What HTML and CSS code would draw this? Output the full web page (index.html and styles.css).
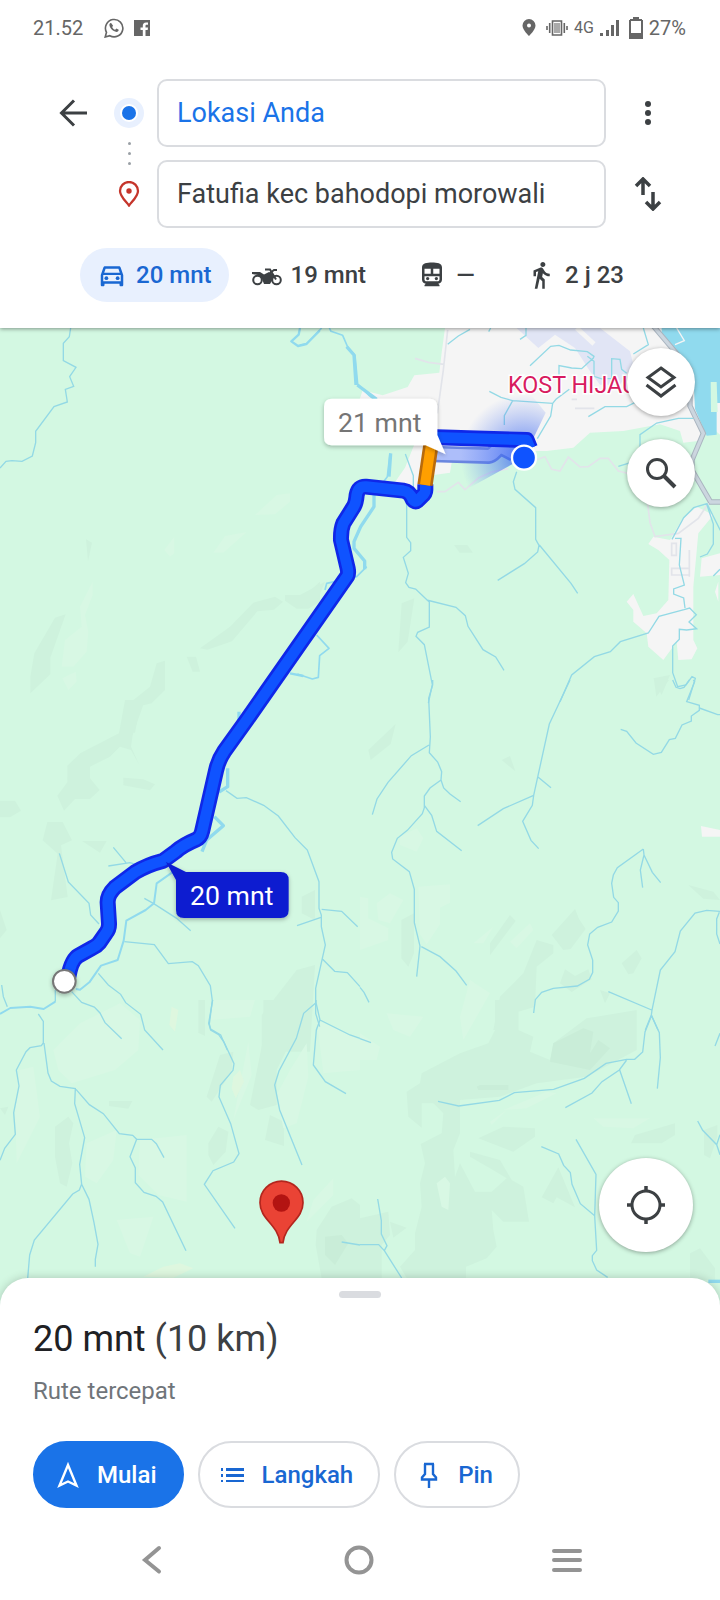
FILE: index.html
```
<!DOCTYPE html>
<html lang="id">
<head>
  <meta charset="UTF-8" />
  <meta name="viewport" content="width=device-width, initial-scale=1" />
  <title>Rute ke Fatufia</title>
  <link rel="stylesheet" href="styles.css">
</head>
<body>
  <header class="top">
    <div class="status-bar">
      <span class="clock">21.52</span>
      <svg class="status-icon" width="20" height="20" viewBox="0 0 20 20" aria-hidden="true">
        <path d="M1.2 19l1.3-4.7A8.7 8.7 0 1 1 5.800 17.700z" fill="none" stroke="#666" stroke-width="1.600"/>
        <path d="M7.300 5.200c-.5-.4-1.700.2-1.900 1.400-.3 2.800 3.600 7.200 7.100 7.300 1.300 0 2.300-.9 2.200-2.100l-2.300-1.200-1.200 1.200c-1.500-.5-2.500-1.600-3-2.900l.9-1.100z" fill="#666"/>
      </svg>
      <svg class="status-icon" width="16" height="16" viewBox="0 0 16 16" aria-hidden="true">
        <path d="M0 0h16v16h-4.500V10h2.200l.3-2.500h-2.500V6c0-.8.3-1.200 1.300-1.200H14V2.500h-2C9.800 2.500 8.800 3.800 8.800 5.700v1.800H6.500V10h2.300v6H0z" fill="#666"/>
      </svg>
      <span class="spacer"></span>
      <svg class="status-icon" width="14" height="17" viewBox="0 0 14 17" aria-hidden="true">
        <path d="M7 0a6.500 6.500 0 0 0-6.500 6.500C.5 11 7 17 7 17s6.500-6 6.500-10.500A6.500 6.500 0 0 0 7 0zm0 4.500a2 2 0 1 1 0 4 2 2 0 0 1 0-4z" fill="#666"/>
      </svg>
      <svg class="status-icon vibrate" width="22" height="16" viewBox="0 0 22 16" aria-hidden="true">
        <path d="M6.500 1h9v14h-9zM3.700 3v10M18.300 3v10M1 6v4M21 6v4" fill="none" stroke="#666" stroke-width="1.600"/>
        <path d="M8 3h6v10H8z" fill="#aaa"/>
      </svg>
      <span class="network">4G</span>
      <svg class="status-icon" width="19" height="18" viewBox="0 0 19 18" aria-hidden="true">
        <path d="M0 14h3v3H0zM6 11h3v6H6zM11 6h3v11h-3zM16 1h3v16h-3z" fill="#666"/>
      </svg>
      <svg class="status-icon battery" width="14" height="22" viewBox="0 0 14 22" aria-hidden="true">
        <path d="M4 0h6v2h3v1h1v19H0V3h1V2h3zM2 4v12h10V4z" fill="#666"/>
      </svg>
      <span>27%</span>
    </div>

    <form class="directions">
      <button type="button" class="icon-btn" aria-label="Kembali">
        <svg width="28" height="28" viewBox="0 0 28 28"><path d="M28 14H3M15 1.500L2.500 14 15 26.500" fill="none" stroke="#3c4043" stroke-width="3"/></svg>
      </button>
      <label class="marker" for="from" aria-label="Titik awal">
        <svg width="30" height="30" viewBox="0 0 30 30">
          <circle cx="15" cy="15" r="15" fill="#e8f0fe"/>
          <circle cx="15" cy="15" r="9" fill="#fff"/>
          <circle cx="15" cy="15" r="7" fill="#1a73e8"/>
        </svg>
      </label>
      <input id="from" class="from" type="text" value="Lokasi Anda">
      <button type="button" class="icon-btn" aria-label="Opsi lainnya">
        <svg width="28" height="28" viewBox="0 0 28 28" fill="#3c4043"><circle cx="14" cy="5" r="3"/><circle cx="14" cy="14" r="3"/><circle cx="14" cy="23" r="3"/></svg>
      </button>

      <span class="dots" aria-hidden="true"><i></i><i></i><i></i></span>

      <label class="marker to-marker" for="to" aria-label="Tujuan">
        <svg width="22" height="26" viewBox="0 0 22 26">
          <path d="M11 24.500C8 20.500 2 15.500 2 10a9 9 0 0 1 18 0c0 5.500-6 10.500-9 14.500z" fill="none" stroke="#c5352b" stroke-width="2.300"/>
          <circle cx="11" cy="10" r="2.700" fill="#c5352b"/>
        </svg>
      </label>
      <input id="to" class="to" type="text" value="Fatufia kec bahodopi morowali">
      <button type="button" class="icon-btn swap" aria-label="Tukar">
        <svg width="28" height="34" viewBox="0 0 28 34"><path d="M9 18V3M2 9l7-7 7 7M19 15v15M12 25l7 7 7-7" fill="none" stroke="#3c4043" stroke-width="3.500"/></svg>
      </button>
    </form>

    <nav class="modes" aria-label="Moda perjalanan">
      <button type="button" class="mode active" aria-pressed="true">
        <svg width="30" height="30" viewBox="0 0 24 24" fill="currentColor"><path d="M18.920 6.010C18.720 5.420 18.160 5 17.500 5h-11c-.66 0-1.210.42-1.420 1.010L3 12v8c0 .55.45 1 1 1h1c.55 0 1-.45 1-1v-1h12v1c0 .55.45 1 1 1h1c.55 0 1-.45 1-1v-8l-2.080-5.990zM6.850 7h10.290l1.080 3.110H5.770L6.850 7zM19 17H5v-5h14v5z"/><circle cx="7.500" cy="14.500" r="1.500"/><circle cx="16.500" cy="14.500" r="1.500"/></svg>
        20 mnt
      </button>
      <button type="button" class="mode">
        <svg width="30" height="30" viewBox="0 0 30 30" fill="#3c4043">
          <g fill="none" stroke="#3c4043" stroke-width="2"><circle cx="5.500" cy="20" r="4.300"/><circle cx="24.500" cy="20" r="4.300"/><path d="M13 9.500h5l6 10M18 13l4-3h3"/></g>
          <path d="M0 12h8l4 2.500 5-2.500 4 2 .5 4-3.500 6h-6l-2-5-4-4-6-1z"/>
        </svg>
        19 mnt
      </button>
      <button type="button" class="mode transit">
        <svg width="30" height="30" viewBox="0 0 24 24" fill="#3c4043"><path fill-rule="evenodd" d="M12 2C8 2 4 2.500 4 6v9.500C4 17.400 5.400 18.700 7 19l-1 1v1h12v-1l-1-1c1.600-.3 3-1.600 3-3.500V6c0-3.500-4-4-8-4zM6 7h5v4H6zm7 0h5v4h-5zm-7 6h12v2.500c0 .8-.7 1.500-1.500 1.500h-9c-.8 0-1.500-.7-1.500-1.500z"/><circle cx="8.500" cy="14.800" r="1.300"/><circle cx="15.500" cy="14.800" r="1.300"/></svg>
        —
      </button>
      <button type="button" class="mode">
        <svg width="30" height="30" viewBox="0 0 24 24" fill="#3c4043"><path d="M13.500 5.500c1.100 0 2-.9 2-2s-.9-2-2-2-2 .9-2 2 .9 2 2 2zM9.800 8.900L7 23h2.100l1.800-8 2.100 2v6h2v-7.500l-2.100-2 .6-3C14.800 12 16.800 13 19 13v-2c-1.900 0-3.500-1-4.300-2.400l-1-1.600c-.4-.6-1-1-1.700-1-.3 0-.5.1-.8.1L6 8.300V13h2V9.600l1.800-.7"/></svg>
        2 j 23
      </button>
    </nav>
  </header>

  <main class="map">
    <!-- map tiles, 3 units per pixel -->
    <svg class="canvas" viewBox="0 984 2160 2940" preserveAspectRatio="xMidYMin slice" role="img" aria-label="Peta rute">
      <defs>
        <radialGradient id="beam" gradientUnits="userSpaceOnUse" cx="672" cy="413" r="190">
          <stop offset="0" stop-color="#2b5cf0" stop-opacity=".8"/>
          <stop offset="1" stop-color="#5b7ff2" stop-opacity="0"/>
        </radialGradient>
        <filter id="soft" x="-20%" y="-20%" width="140%" height="160%">
          <feDropShadow dx="0" dy="5" stdDeviation="7" flood-opacity=".28"/>
        </filter>
      </defs>
      <rect y="984" width="2160" height="2940" fill="#d3f8e2"/>

      <!-- hills -->
      <g fill="#cef2dd">
        <path transform="translate(0 960)" d="M165 893l32-10-46 130v50l-60 57v-50l12-70zM258 658l18 10-12 56zM600 985l90-65 70-72 65-18 24 15-27 24-50 5-76 90-74 25zM855 825h60l45-40v60l-35 21h-35l-35-24zM560 1010h28l12 45h-22zM470 1030l25-8v88l-40 40-35 8-15 80h-32l17-90 60-48z"/>
        <path transform="translate(0 2100)" d="M375 0h60l-37 105-5 35 25 55-25-45-33-10-30 30-60 30v35l29 35-29 27h-45l-33 35-20-45 30-40v-50l40-38 115-59zM370 233l60 5 35 15-15 18-80-15zM0 302h45l18 30-33 20H0zM142 366h46l28 55-33 15 20 155-50 10 20-140-45-40zM246 423h74l-20 35zM0 630l20 60-20 25zM890 810l55-15-15 260H785V945zM905 590l40-20v90l-40-20z"/>
        <path transform="translate(900 960)" d="M462 675h40l17 23h-40zM0 825l75-40-20 50-55 30zM305 850l38-15-20 130-28 32zM1060 1075l50-10-25 60z"/>
        <path transform="translate(1080 2040)" d="M25 210l82-78-15 60-60 48zM425 240l25-12 16 46zM882 0h45l-38 50zM985 615l75 20 20 25-50-4zM124 720l38-20v120l-17 40-21-25zM575 765l70-78 12 30 20 30-45 60-22 3zM390 790l60-85 17 18-77 103zM785 850l45-40 15 25-25 45-15 3zM600 910l15-42 30 20 40-20 10 30-60 38zM720 930l30 10-15 30zM530 780l50 15v25l-50 40-5 120-50 15v55H400l20-100 70-70z"/>
        <path transform="translate(0 3000)" d="M790 0h145l-105 210v105l-55 15-25-15 40-200zM595 0h20v108l-20-10zM660 165l40-10-5 60-60 90-15-15zM327 303h70l-12 23-58-8zM165 380l40-30 15 20-13 60 10 60-17 70-20-10-15-80zM625 430l30-50 30 15-8 60-37 40-15-30zM810 345l42 20v73l-57-18zM950 690l45-70 60-25 25 20v220H965l-18-100zM0 325l25-5-10 25z"/>
        <path transform="translate(1080 3000)" d="M405 0L475 0 475 90 520 110 510 155 570 180 580 130 680 55 830 30 830 150 680 230 530 250 420 290 300 300 300 400 280 450 285 530 300 490 345 575 395 575 440 535 390 505 330 470 330 455 420 480 455 540 490 560 507 665 430 665 395 630 400 690 410 740 380 775 318 800 318 834 140 834 120 800 165 750 165 700 185 620 180 550 195 490 182 432 245 400 250 340 220 310 185 310 185 383 145 350 140 275 180 250 185 220 300 160 385 130 405 90z"/>
        <path transform="translate(1080 3000)" d="M355 415l75-35 95 5v25l-65 45zM545 592l50-90 50 120-55-30-10 18zM813 430l12-25 120-35v35l-40 25zM0 655l85-20 5 70-25 30v100H0zM90 665l50 18-40 30zM990 760l30-15 45 60v35H990zM1032 390l40-15v35l-22 65-18-10z"/>
      </g>
      <g fill="#c9edd8">
        <path transform="translate(1080 3000)" d="M580 130l90-45 30 10-10 65 25-40 35 25-60 65-120-25zM350 260l10-5h85v15h-90z"/>
        <path transform="translate(0 3000)" d="M975 710l50-5 20 25-40 65-30-30z"/>
      </g>
      <g fill="#d8f8e4">
        <path transform="translate(0 960)" d="M765 585l65-60 40-5v25l-45 38zM640 698l35-50 65-12-70 62zM493 690l30-40v50l-13 10zM240 860l38-75v40l-23 60 10 50-5 60-40 45h-35l10-80 50-40zM187 1075l40-20 3 30-25 25z"/>
        <path transform="translate(1080 2040)" d="M0 650l25 5v60l60 30v35L0 810zM175 620l95-7v55l-30 15v50l-40 60-20-30zM50 670l40-30 40 20-40 70-35-10zM340 790l60-50-30 50zM450 785l60-55 10 20-50 55zM330 900l60 40-80 140-10-70zM120 470l50-25 20 30-20 40-50-20z"/>
        <path transform="translate(0 3000)" d="M160 150l80-80 120-60 60 50-5 90-70 60-130 40-40-40zM640 0h125l-15 50-120 10zM870 210l50-80 5 100-35 140-40 15-20-100zM950 60l130 60v90l-110 10zM60 210l40-10 20 150-70 140-5-150zM260 430l90-40-10 90-50 70-35-20zM420 420l140-15v200l-85-20-60-60zM350 660l110-10-40 120-30-10zM700 360l45-235 10 100zM940 600l60-65v50l-80 80z"/>
        <path transform="translate(1080 3000)" d="M0 100l60 40-10 40H0zM80 40l110 10-40 60-50-20zM700 355h170l-50 30-90-5zM430 330l130-55 30 5-90 45zM390 365l50-35-45 45zM230 550l25-20 15 20-5 80-20-10z"/>
      </g>
      <g fill="#def7df">
        <path transform="translate(0 3000)" d="M515 20l20 10-10 65-17-20zM700 230l20-20 12 35-25 50-12-30zM430 830l60-30 50-10 40 15-60 28z"/>
      </g>

      <!-- town and coast -->
      <g transform="translate(900 960)">
        <path fill="#f5f5f5" d="M435 24h825v320l-60-54v72l-50 6-10-35-60-20-110 20-100 5-50 45-80 10-60 0-220 5-10 60-70 10-40 45H350l-80-5 45-65 60-150-125-15-72-37 10-30 60 15 75-25 20-35 75-8 7-60z"/>
        <path fill="#f5f5f5" d="M1145 600L1190 560 1240 585 1195 640 1180 800 1180 960 1192 985 1175 1018 1135 1020 1130 965 1090 1020 1045 980 1040 940 1000 905 1000 870 980 845 1000 822 1030 888 1070 880 1105 840 1108 720 1075 690 1045 672 1060 650 1110 660z"/>
        <path fill="#f5f5f5" d="M1205 715l55-15v65l-60 5zM1255 785v60l-10-30z"/>
        <path fill="#e1e5f5" d="M650 24l65 60 50-40 60 40 45 70 30 40h60l40-60-10-40-90-70z"/>
        <path fill="none" stroke="#f5f5f5" stroke-width="14" d="M830 24l52 48"/>
        <path fill="#90daee" d="M1085 24h175v225h-10v95l-30 3-35-80-5-100-55-75-40-40z"/>
        <path fill="none" stroke="#f5f5f5" stroke-width="4" d="M1130 24l23 38-28 12"/>
        <path fill="#d3f8e2" d="M1232 186h18l3 90h-20z"/>
        <path fill="none" stroke="#aab5c0" stroke-width="16" d="M1060 18l110 130 0 110 40 82-34 80 0 30 56 96h30"/>
        <path fill="none" stroke="#ccd6df" stroke-width="10" d="M1060 18l110 130 0 110 40 82-34 80 0 30 56 96h30"/>
        <g fill="none" stroke="#e2e4ea" stroke-width="5">
          <path d="M443 30l-13 120-18 130M345 115l40 12 47 6M410 515h25l40-28 20 22 40-35 40-18 50-10M680 430l55-20 20 38 25 5 25-42 35 30 25-1 35-25h25l30 38 60 15 25 60 10 80 15 42 70-10 60-45 30-45M815 238h16M825 265h58M1115 670v36h14v-36zM1115 745h53v20h-53zM1168 690v80"/>
        </g>
      </g>

      <!-- rivers -->
      <g class="stream">
        <path transform="translate(0 960)" d="M212 24l-4 26-18 20v52l38 20-19 28 12 29-25 9 6 38-40 14-55 74v34l-10 40-31 16-30-2-18 2-18 20"/>
        <path transform="translate(900 960)" d="M510 28l-35 20-32 25M566 35l6-11M660 58l18-12V24M690 137l62-58 25-3 35 14 50 5 20 14-2 5-35 32-30-2-38-7v30M862 109l20 15 0 45 30 10M980 160l-15-12-5-30-25-2v60l-30 0M568 214l35 18 35 10-25 45v28M638 242l120 8 10-12 40-30M758 250l-6 38-40 68M865 290l50-30h65l30-15M1030 24l15 50-45 28M1180 295h-45l-65 14-50 35v35l0 40-65 20M316 402l24 65 0 45-20 25v115l12 16v24l-22 20 15 48-8 28 10 14 20 5 35 34 6 5v75l-35 16-5 12 25 25 24 120-12 55M380 840l88 22 28 25 8 32 45 70 38 22 25 40M650 455l-10 30 5 23 62 55v95l10 18-4 20-40 35-80 50M718 675l95 115 20 30M780 1145l35-80 68-55 48-15 30-30 84-26 32-50 75-20 17-5 20 20-22 22 23 20-30 4-22-2v30l-20 20v80l15 42 25-5 18-25 10 5-20 65M1116 658l35-65 30-30 40-12 40 80M1220 552l20 60v60l-18 30-22 9M1125 655h18l-5 80 15 60-32 12v15l30 12 4 30M1240 768l20-20"/>
        <path transform="translate(0 2100)" d="M678 272l33 23 28-2 52 23 44 32 50 65 37 37 35 95v80l7 20v35l12 55-9 40-20 90v75l12 40M965 628l60 6 48 46M963 652l-72 25M968 778l36 36 38 4 38 42M325 498l65-10 40 12M340 442l38 46M178 460l27 86 62 64 5 35 25 27M433 595l27 15 70 45 42 37M373 725l90 9 42 57 72-6 18 12 36 60 6 45-9 70 4 15 30 18 20 45M295 820l30 35 37 28 15 25 45 35 12 47 55 60M215 875l30 32 38 14 17 18 15 29 50 48M5 855l5 35 12 30M166 870v35"/>
        <path transform="translate(1080 2040)" d="M218 0v15l-12 40 5 115-3 48 25 28 12 29-2 25 8 24 19 18 32 23M207 195l-53 32-70 80-33 50-14 47M243 300l-33 24-17 24v35l-6 18-45 50-30 24-17 42 3 20 50 38 15 53v100l17 70-10 92M193 376l22 30 15 48 75 58M184 800l56 30 48 43 32 43M630 0l-62 132-47 214-4 30-29 48 25 57 23 25M521 346l-91 40-77 51M533 290l40 33M938 0l10 22 12 4 12-4 16-22M1000 0l4 5-24 60 38 11v15l-24 17v15l-28 12-20 40-18 4-24 38-24 6-52-34-28-35-18-6M1018 84l55 20h10M850 507l-78 56-12 22-5 25 6 42 14 16v25l-20 33-42 16-24 20-6 33 15 45v38l-10 20-36 20-72 7-35 12-19 22-5 40M850 507l2 18-11 45 7 53M852 525l25 52 25 31M1080 694l-40-3-35 8-44 54-16 62-44 55-25 120-2 15-18 45M745 935l130 55M874 1005l20 45M1078 697l-8 20v45l10 30M0 922l12 15 15 30"/>
        <path transform="translate(0 3000)" d="M115 42l15 22v65l-6 8-34 6-12 12-29 55 8 48-16 80 5 65-32 42-14 36M132 129l12 90 10 24 26 16 46 7-2 45 30 102-15 80 6 60 22 45 15 70 12 65-8 45v22M245 552l-7 18-20 12-115 138-14 45-6 70M228 268l40 46 42 27 48 60 40 5 12 12h45l14 13 23 42M410 418l-20 52 16 34v44l26 29 36 12 20 17 70 146M638 0l-12 70 6 20 24 14 16 22 30 65-3 20-38 45-4 35 35 80 25 90-16 25-62 26-26 41 92 132M948 0v8l-37 32-22 75-52 98-13 42 15 75 67 165M948 8l12 52-11 30-9 105 36 50 62 36M960 60l90 45 30 10M1025 726l55 9"/>
        <path transform="translate(1080 3000)" d="M0 116l33 12M875 46l-20 50-7 60-24 22h-24l-62 12-65 45-92 33-118 10-45 23-122 17-62-14M800 180l-22 30-52 35-30 34-80 44M779 210l35 101M874 46l24 52 3 75-9 93M544 440l52 22 15 34 20 22 5 35 25 58 43 36M648 418l60 105-4 125 6 103-13 16v15l13 28 33 22M53 597l11 65v40l17 35-8 15-17-18H0M73 752l52 82M1013 363l15 28 42 43 10 30M1070 434l10-30M1080 100l-15 38"/>
      </g>
      <g fill="none" stroke="#90daee" stroke-width="10" stroke-linejoin="round">
        <path transform="translate(900 960)" stroke-width="5" d="M88 24l5 10 35 12 15 35 22 25 8 86 35 35 25 20M0 75l20-3 45-48M270 400l-8 70-30 40M50 945l37 40-28 22-4 65-18 5-45-15M200 740l-30 30-90 20-5 20"/>
        <path transform="translate(900 960)" d="M140 80l22 25 6 90M172 195l58 43M272 400l-5 70M222 520v40l-40 60-20 45 0 20 32 38v25"/>
        <path transform="translate(0 960)" d="M900 24l-4 20-22 20 20 14 25-6 40-40M870 1060l40 8M720 1190l-10 30" stroke-width="7"/>
        <path transform="translate(0 2100)" d="M717 35v30M683 205v55l-26 16M643 350l27 27-50 43-14 35" />
        <path transform="translate(0 2100)" stroke-width="6" d="M520 515l-50 35-8 60-25 20-58 32-8 60-18 58-50 17-35 50-28 22-12-2M166 905l-35 22-40-7-60 4-31 18"/>
        <path transform="translate(1080 3000)" d="M1045 844h35"/>
      </g>
      <path fill="#f5f5f5" d="M2103 2478l57 12v20h-54z"/>

      <!-- location beam and alternative route -->
      <g transform="translate(900 960)">
        <path fill="none" stroke="#6a86df" stroke-width="50" d="M400 402l165 5c20-2 20-24 42-24l35 18"/>
        <path fill="none" stroke="#adbefa" stroke-width="34" d="M400 402l165 5c20-2 20-24 42-24l35 18"/>
        <path fill="url(#beam)" d="M672 413l65-135-57-70-140 25-70 150 30 125z"/>
      </g>

      <!-- main route -->
      <g fill="none" stroke-linejoin="round">
        <path stroke="#0f27e8" stroke-width="48" d="M1310 1312l270 8 10 25M1276 1453V1470Q1276 1480 1266 1488L1252 1502Q1245 1508 1238 1498Q1230 1475 1210 1472L1098 1460Q1075 1458 1070 1485Q1068 1510 1060 1522L1030 1570Q1022 1590 1023 1620L1043 1705Q1046 1720 1042 1728L740 2160L672 2255Q655 2280 648 2312L606 2495Q602 2512 588 2519Q550 2535 528 2554L490 2582Q440 2595 405 2617L345 2662Q322 2685 323 2708L327 2770Q328 2787 318 2799L298 2828Q290 2838 275 2845L235 2867Q215 2878 205 2930"/>
        <path stroke="#0f53ff" stroke-width="32" d="M1310 1312l270 8 10 25M1276 1447V1470Q1276 1480 1266 1488L1252 1502Q1245 1508 1238 1498Q1230 1475 1210 1472L1098 1460Q1075 1458 1070 1485Q1068 1510 1060 1522L1030 1570Q1022 1590 1023 1620L1043 1705Q1046 1720 1042 1728L740 2160L672 2255Q655 2280 648 2312L606 2495Q602 2512 588 2519Q550 2535 528 2554L490 2582Q440 2595 405 2617L345 2662Q322 2685 323 2708L327 2770Q328 2787 318 2799L298 2828Q290 2838 275 2845L235 2867Q215 2878 205 2930"/>
        <path stroke="#b86a0c" stroke-width="46" d="M1295 1320l-20 135"/>
        <path stroke="#ff9f00" stroke-width="30" d="M1295 1320l-20 135"/>
      </g>

      <circle cx="1572" cy="1373" r="36" fill="#0f53ff" stroke="#fff" stroke-width="7"/>
      <circle cx="193" cy="2944" r="34" fill="#fff" stroke="#777" stroke-width="6" filter="url(#soft)"/>

      <!-- destination pin -->
      <path d="M840 3728c-6-55-60-70-60-120a64 64 0 0 1 129 0c0 50-54 65-60 120z" fill="#ea4335" stroke="#b3261e" stroke-width="5"/>
      <circle cx="844" cy="3609" r="26" fill="#b31412"/>

      <text class="place" x="1524" y="1180">KOST HIJAU</text>

      <g filter="url(#soft)">
        <path fill="#fff" d="M996 1196h292q24 0 24 24v85l25 58-60-27H996q-24 0-24-24v-92q0-24 24-24z"/>
      </g>
      <text class="eta" x="1014" y="1296">21 mnt</text>
      <g filter="url(#soft)">
        <path fill="#0b1cd0" d="M498 2586l60 30h284q24 0 24 24v90q0 24-24 24H552q-24 0-24-24v-90z"/>
      </g>
      <text class="eta chosen" x="570" y="2714">20 mnt</text>
    </svg>

    <div class="map-tools">
      <button type="button" class="fab" aria-label="Lapisan peta">
        <svg width="32" height="34" viewBox="0 0 32 34" fill="none" stroke="#3c4043" stroke-width="3"><path d="M16 3L29 12.500 16 22 3 12.500zM1.500 20L16 31l14.500-11"/></svg>
      </button>
      <button type="button" class="fab" aria-label="Telusuri">
        <svg width="32" height="32" viewBox="0 0 32 32" fill="none" stroke="#3c4043" stroke-width="3"><circle cx="12" cy="12" r="9.500"/><path d="M19 19l11 11" stroke-width="4"/></svg>
      </button>
    </div>
    <button type="button" class="fab locate" aria-label="Lokasi saya">
      <svg width="38" height="38" viewBox="0 0 38 38" fill="none" stroke="#3c4043" stroke-width="3"><circle cx="19" cy="19" r="14"/><path d="M19 0v6M19 32v6M0 19h6M32 19h6" stroke-width="3.500"/></svg>
    </button>
  </main>

  <section class="sheet">
    <div class="handle"></div>
    <h1>20 mnt <span>(10 km)</span></h1>
    <p>Rute tercepat</p>
    <div class="actions">
      <button type="button" class="primary">
        <svg width="28" height="28" viewBox="0 0 28 28" fill="none" stroke="currentColor" stroke-width="2.400"><path d="M14 4L5.500 24.500 14 20.500l8.500 4z"/></svg>
        Mulai
      </button>
      <button type="button">
        <svg width="28" height="28" viewBox="0 0 28 28" fill="currentColor"><path d="M2 7h2v3H2zM7 7h18v3H7zM2 13h2v3H2zM7 13h18v3H7zM2 19h2v2H2zM7 19h18v2H7z"/></svg>
        Langkah
      </button>
      <button type="button">
        <svg width="28" height="28" viewBox="0 0 28 28" fill="none" stroke="currentColor" stroke-width="2.400"><path d="M9 3h10M10 3v10l-3 3.500v2h14v-2L18 13V3M14 18v9"/></svg>
        Pin
      </button>
    </div>
    <nav class="system-nav" aria-label="Navigasi sistem">
      <button type="button" aria-label="Kembali"><svg width="30" height="30" viewBox="0 0 30 30"><path d="M22 3L8 15l14 11.500"/></svg></button>
      <button type="button" aria-label="Beranda"><svg width="30" height="30" viewBox="0 0 30 30"><circle cx="15" cy="15" r="12.500"/></svg></button>
      <button type="button" aria-label="Terbaru"><svg width="30" height="30" viewBox="0 0 30 30"><path d="M2 6h26M2 15h26M2 25h26"/></svg></button>
    </nav>
  </section>
</body>
</html>
```
FILE: styles.css
```
*, *::before, *::after {
  box-sizing: border-box;
}
body {
  margin: 0;
  min-height: 100vh;
  display: flex;
  flex-direction: column;
  font-family: Roboto, "Liberation Sans", Arial, sans-serif;
  background-color: #fff;
  color: #3c4043;
}
button {
  border: 0;
  padding: 0;
  background: none;
  font-family: inherit;
  cursor: pointer;
}
svg {
  display: block;
  flex: none;
}

/* Header */
.top {
  position: relative;
  z-index: 1;
  background-color: #fff;
  box-shadow: 0 1px 4px rgba(0, 0, 0, 0.4);
}
.status-bar {
  display: flex;
  align-items: center;
  height: 55px;
  padding: 0 34px 0 33px;
  font-size: 20px;
  color: #666;
}
.status-bar .clock {
  margin-right: 21px;
}
.status-bar .status-icon {
  margin-right: 10px;
}
.status-bar .vibrate,
.status-bar .battery,
.status-bar .network {
  margin-right: 6px;
}
.status-bar .network {
  font-size: 16px;
}
.spacer {
  flex: 1;
}

.directions {
  display: grid;
  grid-template-columns: 56px 56px 1fr 84px;
  grid-template-rows: 68px 13px 68px;
  align-items: center;
  justify-items: center;
  margin: 0;
  padding: 24px 30px 20px 45px;
}
.directions input {
  width: 100%;
  height: 68px;
  padding: 0 18px;
  border: 2px solid #dadce0;
  border-radius: 10px;
  background-color: #fff;
  font-family: inherit;
  font-size: 27px;
  color: #3c4043;
}
.directions input:focus {
  outline: none;
  border-color: #1a73e8;
}
.directions .from {
  color: #1a73e8;
}
.dots {
  grid-column: 2;
  display: flex;
  flex-direction: column;
  gap: 7px;
}
.dots i {
  width: 3px;
  height: 3px;
  border-radius: 50%;
  background-color: #9aa0a6;
}
.to-marker {
  grid-area: 3 / 2;
}
.to {
  grid-area: 3 / 3;
}
.swap {
  grid-area: 3 / 4;
}

.modes {
  display: flex;
  gap: 6px;
  padding: 0 80px 26px;
}
.mode {
  display: flex;
  align-items: center;
  justify-content: center;
  gap: 9px;
  height: 54px;
  padding: 0 17px;
  border-radius: 27px;
  font-size: 24px;
  font-weight: 500;
  color: #3c4043;
  white-space: nowrap;
}
.mode.transit {
  min-width: 114px;
}
.mode.active {
  background-color: #e8f0fe;
  color: #1967d2;
}

/* Map */
.map {
  position: relative;
  flex: 1;
  min-height: 480px;
  overflow: hidden;
  background-color: #d3f8e2;
}
.canvas {
  position: absolute;
  inset: 0;
  width: 100%;
  height: 100%;
}
.stream {
  fill: none;
  stroke: #93d9e5;
  stroke-width: 4;
}
.place {
  font-size: 70px;
  fill: #d81b60;
  stroke: #fff;
  stroke-width: 9;
  paint-order: stroke;
}
.eta {
  font-size: 80px;
  fill: #757575;
}
.eta.chosen {
  fill: #fff;
}
.map-tools {
  position: absolute;
  top: 20px;
  right: 25px;
  display: flex;
  flex-direction: column;
  gap: 23px;
}
.fab {
  display: flex;
  align-items: center;
  justify-content: center;
  width: 68px;
  height: 68px;
  border-radius: 50%;
  background-color: #fff;
  box-shadow: 0 1px 4px rgba(0, 0, 0, 0.35);
}
.locate {
  position: absolute;
  right: 27px;
  bottom: 56px;
  width: 94px;
  height: 94px;
}

/* Bottom sheet */
.sheet {
  position: relative;
  margin-top: -30px;
  padding: 13px 33px 0;
  border-radius: 28px 28px 0 0;
  background-color: #fff;
  box-shadow: 0 0 10px rgba(0, 0, 0, 0.2);
}
.handle {
  width: 42px;
  height: 7px;
  margin: 0 auto 19px;
  border-radius: 4px;
  background-color: #dadce0;
}
.sheet h1 {
  margin: 0 0 14px;
  font-size: 36px;
  line-height: 44px;
  font-weight: 400;
  color: #202124;
}
.sheet h1 span {
  color: #3c4043;
}
.sheet p {
  margin: 0 0 34px;
  font-size: 24px;
  line-height: 32px;
  color: #70757a;
}
.actions {
  display: flex;
  gap: 14px;
}
.actions button {
  display: flex;
  align-items: center;
  gap: 15px;
  height: 67px;
  padding: 0 25px 0 19px;
  border: 2px solid #dadce0;
  border-radius: 34px;
  font-size: 24px;
  font-weight: 500;
  color: #1967d2;
}
.actions .primary {
  border-color: #1a73e8;
  background-color: #1a73e8;
  color: #fff;
}
.system-nav {
  display: grid;
  grid-template-columns: repeat(3, 1fr);
  justify-items: center;
  align-items: center;
  height: 80px;
  margin-top: 12px;
  padding: 0 16px 0 15px;
}
.system-nav svg {
  fill: none;
  stroke: #949494;
  stroke-width: 4;
  stroke-linecap: round;
}
```
